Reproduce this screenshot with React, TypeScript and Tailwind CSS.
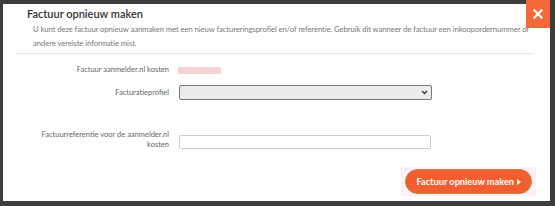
import React from "react";

export default function App() {
  return (
    <div className="w-[555px] h-[206px] bg-[#3d3d3d] pl-[3px] pt-[4px] pr-[5px] pb-[5px] overflow-hidden" style={{ fontFamily: "Lato, 'Noto Sans', sans-serif" }}>
      <div className="relative bg-white w-[547px] h-[197px] flex flex-col">
        <div className="absolute right-0 top-[-4px] w-[24px] h-[28px] bg-[#f4683a] flex items-center justify-center">
          <svg width="10" height="10" viewBox="0 0 10 10">
            <path d="M1.5 1.5 L8.5 8.5 M8.5 1.5 L1.5 8.5" stroke="white" strokeWidth="2.2" strokeLinecap="square" />
          </svg>
        </div>
        <div className="px-[13px]">
          <div className="pl-[11px] pt-[1px] text-[11px] font-semibold text-[#333] leading-[17px]">Factuur opnieuw maken</div>
          <div className="pl-[17px] pr-[0px] pb-[3px] text-[7.7px] text-[#777] leading-[14px] tracking-[-0.08px] whitespace-nowrap">
            U kunt deze factuur opnieuw aanmaken met een nieuw factureringsprofiel en/of referentie. Gebruik dit wanneer de factuur een inkoopordernummer of
            <br />
            andere vereiste informatie mist.
          </div>
          <div className="h-px bg-[#e5e5e5] mr-[4px]" />
        </div>
        <div className="flex flex-col text-[7.5px] text-[#666] mt-[10px]">
          <div className="flex items-center h-[12px]">
            <div className="w-[166px] text-right">Factuur aanmelder.nl kosten</div>
            <div className="ml-[9px] w-[43px] h-[7px] bg-[#f6d3d0] rounded-[1px]" />
          </div>
          <div className="flex items-center mt-[9px] h-[15px]">
            <div className="w-[166px] text-right">Facturatieprofiel</div>
            <div className="ml-[10px] w-[253px] h-[15px] bg-[#ececec] border border-[#777] rounded-[2px] flex items-center justify-end pr-[3px]">
              <svg width="7" height="5" viewBox="0 0 7 5">
                <path d="M1 1 L3.5 3.5 L6 1" stroke="#333" strokeWidth="1.3" fill="none" />
              </svg>
            </div>
          </div>
          <div className="flex items-start mt-[30px]">
            <div className="w-[166px] text-right leading-[10px]">Factuurreferentie voor de aanmelder.nl<br />kosten</div>
            <div className="ml-[10px] mt-[5px] w-[252px] h-[14px] bg-white border border-[#ccc] rounded-[2px]" />
          </div>
        </div>
        <div className="flex justify-end pr-[14px] mt-[17px]">
          <div className="bg-[#fdf0fb] px-[4px] py-[2px]">
            <button className="h-[25px] px-[10px] rounded-full bg-[#f25e2f] border border-[#b98a3c] text-white text-[9.2px] font-bold flex items-center gap-[3px]">
              Factuur opnieuw maken
              <svg width="4" height="6" viewBox="0 0 4 6"><path d="M0 0 L4 3 L0 6 Z" fill="white" /></svg>
            </button>
          </div>
        </div>
      </div>
    </div>
  );
}
